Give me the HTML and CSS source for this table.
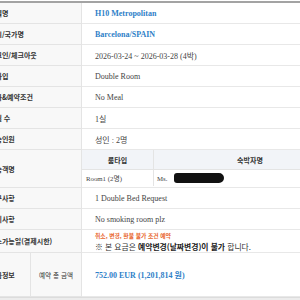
FILE: index.html
```html
<!DOCTYPE html>
<html lang="ko">
<head>
<meta charset="utf-8">
<link rel="stylesheet" href="styles.css">
</head>
<body>
<div class="sheet">
  <div class="label">호텔명</div>
  <div class="value strong blue">H10 Metropolitan</div>

  <div class="label">도시/국가명</div>
  <div class="value strong blue">Barcelona/SPAIN</div>

  <div class="label">체크인/체크아웃</div>
  <div class="value">2026-03-24 ~ 2026-03-28 (4박)</div>

  <div class="label">룸타입</div>
  <div class="value">Double Room</div>

  <div class="label">식사&amp;예약조건</div>
  <div class="value">No Meal</div>

  <div class="label">객실 수</div>
  <div class="value">1실</div>

  <div class="label">투숙인원</div>
  <div class="value">성인 : 2명</div>

  <div class="label tall">투숙객명</div>
  <div class="value nested-cell">
    <div class="guests">
      <div class="gh">룸타입</div>
      <div class="gh">숙박자명</div>
      <div class="gd">Room1 (2명)</div>
      <div class="gd">Ms. <span class="redact"></span></div>
    </div>
  </div>

  <div class="label">요구사항</div>
  <div class="value">1 Double Bed Request</div>

  <div class="label">특이사항</div>
  <div class="value">No smoking room plz</div>

  <div class="label cancel">취소가능일(결제시한)</div>
  <div class="value cancel-value">
    <div class="warn">취소, 변경, 환불 불가 조건 예약</div>
    <div class="notice">※ 본 요금은 <b>예약변경(날짜변경)이 불가</b> 합니다.</div>
  </div>

  <div class="label price-label">요금정보</div>
  <div class="sublabel">예약 총 금액</div>
  <div class="value strong blue price">752.00 EUR (1,201,814 원)</div>
</div>
<div class="footer-bar"></div>
</body>
</html>
```

FILE: styles.css
```css
html, body {
  margin: 0;
  padding: 0;
  background: #fff;
  overflow: hidden;
  width: 300px;
  height: 300px;
}
body {
  padding-top: 1px;
  font-family: "Liberation Serif", "Noto Sans CJK KR", serif;
}
.sheet {
  display: grid;
  grid-template-columns: 53px 51px 1fr;
  width: 368px;
  margin-left: -22px;
  border-top: 2px solid #a3a3a3;
}
.label {
  grid-column: span 2;
  background: #f8f8f8;
  border-bottom: 1px solid #e4e4e4;
  border-right: 1px solid #e4e4e4;
  height: 20px;
  display: flex;
  align-items: center;
  padding-left: 11px;
  font-family: "Noto Sans CJK KR", sans-serif;
  font-weight: 700;
  font-size: 7px;
  color: #333;
  white-space: nowrap;
}
.label.tall { height: 37px; }
.label.cancel { height: 22px; }
.label.price-label {
  grid-column: span 1;
  height: 43px;
  border-right: 1px solid #e4e4e4;
}
.sublabel {
  background: #f8f8f8;
  border-bottom: 1px solid #e4e4e4;
  border-right: 1px solid #e4e4e4;
  display: flex;
  align-items: center;
  justify-content: center;
  font-family: "Noto Sans CJK KR", sans-serif;
  font-size: 6.6px;
  color: #333;
  white-space: nowrap;
}
.value {
  border-bottom: 1px solid #e8e8e8;
  display: flex;
  align-items: center;
  padding-left: 13px;
  font-size: 8px;
  color: #444;
  white-space: nowrap;
}
.strong { font-weight: 700; }
.blue { color: #2f7fc8; }
.nested-cell {
  padding-left: 0;
  align-items: stretch;
}
.guests {
  flex: 1;
  display: grid;
  grid-template-columns: 72px 1fr;
  grid-template-rows: 20px 16px;
}
.gh {
  background: #f2f4f8;
  border-bottom: 1px solid #e4e4e4;
  border-right: 1px solid #e4e4e4;
  display: flex;
  align-items: center;
  justify-content: center;
  font-family: "Noto Sans CJK KR", sans-serif;
  font-weight: 700;
  font-size: 7px;
  color: #333;
}
.gh:nth-child(2) { border-right: none; }
.gd {
  display: flex;
  align-items: center;
  padding-left: 4px;
  font-size: 6.8px;
  color: #444;
  border-right: 1px solid #e4e4e4;
}
.gd:last-child { border-right: none; padding-left: 3px; }
.redact {
  display: inline-block;
  width: 50px;
  height: 10px;
  margin-left: 7px;
  background: #111;
  border-radius: 3px 5px 5px 3px;
}
.cancel-value {
  flex-direction: column;
  align-items: flex-start;
  justify-content: center;
  gap: 3px;
}
.warn {
  font-family: "Noto Sans CJK KR", sans-serif;
  font-weight: 700;
  font-size: 5.8px;
  line-height: 7px;
  color: #e8642c;
}
.notice {
  font-family: "Noto Sans CJK KR", sans-serif;
  font-size: 7.8px;
  line-height: 9px;
  color: #333;
}
.notice b { font-weight: 700; color: #222; }
.price { height: 43px; }
.footer-bar {
  height: 10px;
  background: #ececec;
  border-top: 1px solid #dcdcdc;
}
```
